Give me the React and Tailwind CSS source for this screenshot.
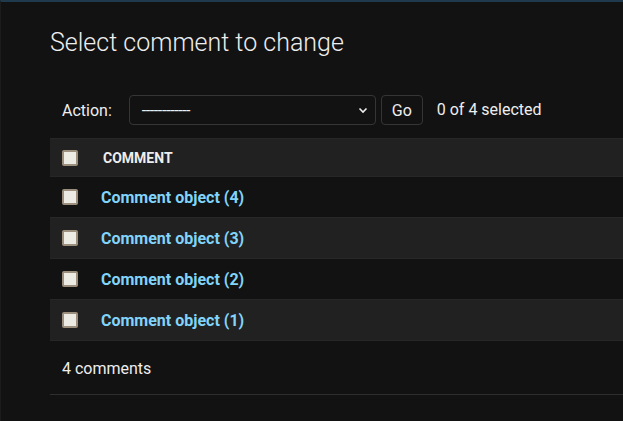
import React from 'react';

const rows = [4, 3, 2, 1];

const Checkbox = () => (
    <span className="block w-[16px] h-[16px] bg-[#ebeae3] border-2 border-[#9b8e7c] rounded-[2px]"></span>
);

const App = () => {
    return (
        <div className="w-[623px] h-[421px] overflow-hidden bg-[#121212] text-[#eeeeee] border-t-2 border-t-[#1f3a4d] border-l border-l-[#1c1c1c] font-['Roboto',sans-serif]">
            <div className="pl-[49px] pt-[25px]">
                {/* Title */}
                <h1 className="text-[25px] font-light leading-[32px] text-[#eeeeee]">Select comment to change</h1>

                {/* Actions bar */}
                <div className="mt-[36px] flex items-center h-[30px] pl-[12px] text-[16px]">
                    <span className="mr-[17px] pt-[1px]">Action:</span>
                    <div className="w-[247px] h-[30px] flex items-center justify-between border border-[#353535] rounded-[4px] pl-[12px] pr-[6px]">
                        <span className="text-[16px] tracking-[-0.4px] pt-[1px]">------------</span>
                        <svg width="12" height="12" viewBox="0 0 12 12" fill="none" stroke="#eeeeee" strokeWidth="1.6">
                            <path d="M2.5 4.5 L6 8 L9.5 4.5" />
                        </svg>
                    </div>
                    <button className="ml-[5px] w-[42px] h-[30px] border border-[#353535] rounded-[4px] text-[16px] text-[#eeeeee] pt-[1px]">Go</button>
                    <span className="ml-[14px] text-[16px]">0 of 4 selected</span>
                </div>

                {/* Result table */}
                <div className="mt-[13px]">
                    <div className="flex items-center h-[39px] bg-[#212121] border-y border-[#272727]">
                        <div className="w-[51px] pl-[12px]"><Checkbox /></div>
                        <span className="pl-[2px] pt-[1px] text-[14px] font-bold uppercase">Comment</span>
                    </div>
                    {rows.map((n, i) => (
                        <div
                            key={n}
                            className={`flex items-center h-[41px] border-b border-[#272727] ${i % 2 === 1 ? 'bg-[#212121]' : 'bg-[#121212]'}`}
                        >
                            <div className="w-[51px] pl-[12px]"><Checkbox /></div>
                            <a className="pt-[1px] text-[16px] font-bold text-[#81d4fa]">Comment object ({n})</a>
                        </div>
                    ))}
                    <div className="h-[54px] flex items-center pl-[12px] pt-[2px] text-[16px] border-b border-[#2e2e2e]">
                        4 comments
                    </div>
                </div>
            </div>
        </div>
    );
};

export default App;
